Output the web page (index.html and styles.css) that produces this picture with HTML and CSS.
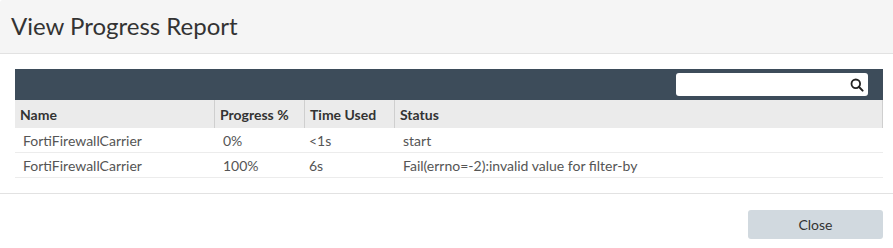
FILE: index.html
```html
<!DOCTYPE html>
<html>
<head>
<meta charset="utf-8">
<link rel="stylesheet" href="styles.css">
</head>
<body>
<div class="dialog">
  <div class="dlg-header"><h1 class="dlg-title">View Progress Report</h1></div>
  <div class="dlg-body">
    <div class="grid">
      <div class="toolbar">
        <div class="search">
          <input class="search-input" type="text">
          <svg class="search-icon" width="14" height="14" viewBox="0 0 14 14"><circle cx="5.8" cy="5.8" r="4.3" fill="none" stroke="#222" stroke-width="1.8"/><path d="M8.8 8.8 L12.6 12.6" stroke="#222" stroke-width="2" stroke-linecap="round"/></svg>
        </div>
      </div>
      <div class="row head">
        <div class="cell c1">Name</div>
        <div class="cell c2">Progress %</div>
        <div class="cell c3">Time Used</div>
        <div class="cell c4">Status</div>
      </div>
      <div class="row data">
        <div class="cell c1">FortiFirewallCarrier</div>
        <div class="cell c2">0%</div>
        <div class="cell c3">&lt;1s</div>
        <div class="cell c4">start</div>
      </div>
      <div class="row data">
        <div class="cell c1">FortiFirewallCarrier</div>
        <div class="cell c2">100%</div>
        <div class="cell c3">6s</div>
        <div class="cell c4">Fail(errno=-2):invalid value for filter-by</div>
      </div>
    </div>
  </div>
  <div class="dlg-footer">
    <button class="btn">Close</button>
  </div>
</div>
</body>
</html>
```
FILE: styles.css
```css
html, body {
  margin: 0;
  padding: 0;
  background: #fff;
  font-family: Lato, "Open Sans", sans-serif;
  color: #333;
}
.dialog {
  width: 893px;
  height: 248px;
  overflow: hidden;
}
.dlg-header {
  height: 53px;
  background: #f5f5f5;
  border-bottom: 1px solid #e2e2e2;
  border-top-left-radius: 3px;
  display: flex;
  align-items: center;
}
.dlg-title {
  margin: 0 0 0 11px;
  font-size: 24px;
  font-weight: 400;
  color: #333;
  line-height: 1;
  position: relative;
  top: -1px;
}
.dlg-body {
  padding: 15px 10px 15px 15px;
  border-bottom: 1px solid #e2e2e2;
}
.grid {
  display: flex;
  flex-direction: column;
}
.toolbar {
  height: 31px;
  background: #3d4c5a;
  display: flex;
  align-items: center;
  justify-content: flex-end;
  padding-right: 15px;
}
.search {
  width: 192px;
  height: 23px;
  background: #fff;
  border-radius: 3px;
  display: flex;
  align-items: center;
  box-sizing: border-box;
}
.search-input {
  border: none;
  outline: none;
  background: transparent;
  flex: 1;
  min-width: 0;
  height: 21px;
  padding: 0 4px;
  font-family: inherit;
}
.search-icon {
  margin-right: 4px;
  flex: none;
}
.row {
  display: grid;
  grid-template-columns: 199px 90px 90px 1fr;
  font-size: 14px;
}
.head {
  height: 28px;
  background: #ebebeb;
  font-weight: 700;
  color: #333;
  border-right: 1px solid #cfcfcf;
}
.head .cell {
  padding-left: 5px;
  display: flex;
  align-items: center;
}
.head .cell + .cell {
  border-left: 1px solid #cfcfcf;
}
.data {
  height: 24px;
  color: #555;
  border-bottom: 1px solid #ececec;
}
.data .cell {
  padding-left: 8px;
  display: flex;
  align-items: center;
  white-space: nowrap;
}
.data .c2 { padding-left: 9px; }
.data .c3 { padding-left: 5px; }
.data .c4 { padding-left: 9px; }
.dlg-footer {
  display: flex;
  justify-content: flex-end;
  padding: 16px 10px 0 0;
}
.btn {
  width: 135px;
  height: 29px;
  border: none;
  border-radius: 3px;
  background: #d1d9df;
  color: #333;
  font-family: inherit;
  font-size: 14px;
  padding: 0;
}
```
